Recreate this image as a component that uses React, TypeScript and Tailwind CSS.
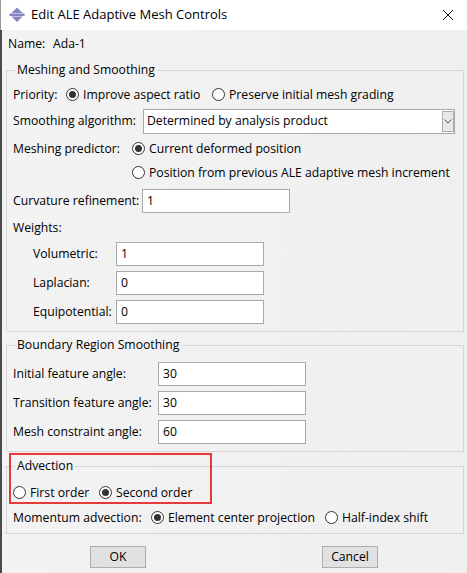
import React from "react";

const Radio = ({ checked }: { checked?: boolean }) => (
  <span className="inline-flex w-[13px] h-[13px] rounded-full border border-[#333333] bg-white items-center justify-center shrink-0">
    {checked && <span className="w-[7px] h-[7px] rounded-full bg-[#333333]" />}
  </span>
);

const Option = ({ checked, label, className }: { checked?: boolean; label: string; className?: string }) => (
  <span className={"flex items-center gap-[4px] whitespace-nowrap " + (className ?? "")}>
    <Radio checked={checked} />
    <span>{label}</span>
  </span>
);

const Field = ({ value }: { value: string }) => (
  <div className="w-[148px] h-[24px] border border-[#a9a9a9] bg-white flex items-center pl-[4px]">{value}</div>
);

const Group = ({ title, children, className }: { title: string; children: React.ReactNode; className?: string }) => (
  <fieldset className={"ml-[4px] w-[458px] border border-[#d6d6d6] p-0 " + (className ?? "")}>
    <legend className="ml-[8px] px-[2px] leading-[16px]">{title}</legend>
    <div className="flex flex-col pl-[6px] pr-[6px]">{children}</div>
  </fieldset>
);

export default function App() {
  return (
    <div className="relative w-[467px] h-[573px] overflow-hidden bg-[#f0f0f0] text-black font-['Open_Sans',sans-serif] text-[12.2px]">
      {/* Title bar */}
      <div className="h-[30px] bg-white flex items-center border-l border-[#9a9a9a]">
        <svg width="16" height="16" viewBox="0 0 16 16" className="ml-[8px]">
          <polygon points="2.5,6 8,0.5 13.5,6" fill="#8585c4" />
          <rect x="0.5" y="6.5" width="15" height="2.5" fill="#8585c4" />
          <polygon points="2.5,9.5 8,15 13.5,9.5" fill="#8585c4" />
        </svg>
        <span className="ml-[6px] text-[13px]">Edit ALE Adaptive Mesh Controls</span>
        <svg width="12" height="12" viewBox="0 0 12 12" className="ml-auto mr-[13px]">
          <path d="M1 1 L11 11 M11 1 L1 11" stroke="#111" strokeWidth="1" />
        </svg>
      </div>

      {/* Body */}
      <div className="h-[543px] border-l-2 border-[#4a4a4a] bg-gradient-to-r from-[#f3f3f3] to-[#efefef] flex flex-col pt-[4px]">
        <div className="h-[20px] flex items-center pl-[6px]">
          <span className="w-[45px]">Name:</span>
          <span>Ada-1</span>
        </div>

        <Group title="Meshing and Smoothing" className="mt-[8px] pb-[7px]">
          <div className="mt-[6px] h-[22px] flex items-center">
            <span className="w-[53px]">Priority:</span>
            <Option checked label="Improve aspect ratio" className="w-[146px]" />
            <Option label="Preserve initial mesh grading" />
          </div>
          <div className="mt-[3px] h-[25px] flex items-center">
            <span className="w-[130px] whitespace-nowrap">Smoothing algorithm:</span>
            <div className="w-[312px] h-[25px] border border-[#a9a9a9] bg-white flex items-center pl-[3px]">
              <span className="flex-1">Determined by analysis product</span>
              <div className="w-[12px] h-[21px] border border-[#acacac] bg-[#e8e8e8] flex items-center justify-center">
                <svg width="8" height="5" viewBox="0 0 8 5">
                  <path d="M0.5 0.5 L4 4 L7.5 0.5" stroke="#555" strokeWidth="1" fill="none" />
                </svg>
              </div>
            </div>
          </div>
          <div className="mt-[4px] h-[22px] flex items-center">
            <span className="w-[119px] whitespace-nowrap">Meshing predictor:</span>
            <Option checked label="Current deformed position" />
          </div>
          <div className="mt-[2px] h-[22px] flex items-center pl-[119px]">
            <Option label="Position from previous ALE adaptive mesh increment" />
          </div>
          <div className="mt-[5px] h-[24px] flex items-center">
            <span className="w-[129px] whitespace-nowrap">Curvature refinement:</span>
            <Field value="1" />
          </div>
          <div className="mt-[4px] h-[22px] flex items-center">Weights:</div>
          <div className="mt-[3px] h-[24px] flex items-center pl-[20px]">
            <span className="w-[83px]">Volumetric:</span>
            <Field value="1" />
          </div>
          <div className="mt-[5px] h-[24px] flex items-center pl-[20px]">
            <span className="w-[83px]">Laplacian:</span>
            <Field value="0" />
          </div>
          <div className="mt-[5px] h-[24px] flex items-center pl-[20px]">
            <span className="w-[83px] whitespace-nowrap">Equipotential:</span>
            <Field value="0" />
          </div>
        </Group>

        <Group title="Boundary Region Smoothing" className="mt-[5px] pb-[7px]">
          <div className="mt-[9px] h-[24px] flex items-center">
            <span className="w-[145px] whitespace-nowrap">Initial feature angle:</span>
            <Field value="30" />
          </div>
          <div className="mt-[5px] h-[24px] flex items-center">
            <span className="w-[145px] whitespace-nowrap">Transition feature angle:</span>
            <Field value="30" />
          </div>
          <div className="mt-[5px] h-[24px] flex items-center">
            <span className="w-[145px] whitespace-nowrap">Mesh constraint angle:</span>
            <Field value="60" />
          </div>
        </Group>

        <Group title="Advection" className="mt-[6px] pb-[4px]">
          <div className="mt-[8px] h-[22px] flex items-center">
            <Option label="First order" className="w-[86px]" />
            <Option checked label="Second order" />
          </div>
          <div className="mt-[3px] h-[22px] flex items-center">
            <span className="w-[138px] whitespace-nowrap">Momentum advection:</span>
            <Option checked label="Element center projection" className="w-[174px]" />
            <Option label="Half-index shift" />
          </div>
        </Group>

        <div className="mt-[12px] flex items-center pl-[88px] gap-[176px]">
          <button className="w-[56px] h-[22px] border border-[#adadad] bg-[#e1e1e1] flex items-center justify-center">OK</button>
          <button className="w-[56px] h-[22px] border border-[#adadad] bg-[#e1e1e1] flex items-center justify-center">Cancel</button>
        </div>
      </div>

      {/* Red highlight annotation */}
      <div className="absolute left-[9px] top-[453px] w-[203px] h-[51px] border-2 border-[#e53a3c] pointer-events-none" />
    </div>
  );
}
